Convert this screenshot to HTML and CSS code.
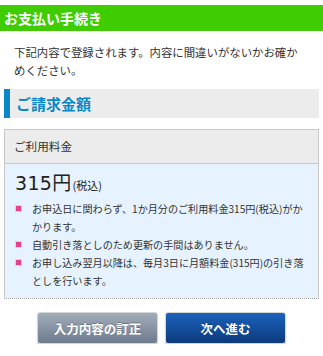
FILE: index.html
```html
<!DOCTYPE html>
<html lang="ja">
<head>
<meta charset="utf-8">
<link rel="stylesheet" href="styles.css">
</head>
<body>
<h1 class="page-title">お支払い手続き</h1>
<p class="lead">下記内容で登録されます。内容に間違いがないかお確かめください。</p>
<h2 class="section-title">ご請求金額</h2>
<div class="card">
  <div class="card-head">ご利用料金</div>
  <div class="card-body">
    <div class="price"><span class="amount">315円</span><span class="tax">(税込)</span></div>
    <ul class="notes">
      <li>お申込日に関わらず、1か月分のご利用料金315円(税込)がかかります。</li>
      <li>自動引き落としのため更新の手間はありません。</li>
      <li>お申し込み翌月以降は、毎月3日に月額料金(315円)の引き落としを行います。</li>
    </ul>
  </div>
</div>
<div class="actions">
  <button class="btn btn-back">入力内容の訂正</button>
  <button class="btn btn-next">次へ進む</button>
</div>
</body>
</html>
```
FILE: styles.css
```css
html, body {
  margin: 0;
  padding: 0;
  background: #fff;
}
body {
  padding-top: 5px;
  font-family: "Noto Sans CJK JP", "Noto Sans", sans-serif;
  color: #333;
}
.page-title {
  margin: 0;
  height: 26px;
  line-height: 26px;
  padding-left: 4px;
  background: #3fcc00;
  color: #fff;
  font-size: 14px;
  font-weight: bold;
}
.lead {
  margin: 12px 14px 10px 14px;
  font-size: 11.4px;
  line-height: 18px;
  color: #333;
}
.section-title {
  margin: 0 4px;
  height: 29px;
  line-height: 29px;
  background: #ececec;
  border-left: 6px solid #0a87c8;
  padding-left: 6px;
  color: #0a87c8;
  font-size: 15px;
  font-weight: bold;
}
.card {
  margin: 11px 4px 0 4px;
  border: 1px solid #c8c8c8;
  border-bottom: 1px dotted #a0a0a0;
}
.card-head {
  height: 33px;
  line-height: 33px;
  background: #ececec;
  border-bottom: 1px solid #c8c8c8;
  padding-left: 9px;
  font-size: 11.6px;
  color: #333;
}
.card-body {
  background: #e6f2fd;
  padding: 7px 8px 8px 10px;
}
.price {
  line-height: 24px;
  color: #222;
}
.amount {
  font-family: "DejaVu Sans", "Noto Sans CJK JP", sans-serif;
  font-size: 19px;
  letter-spacing: 0.3px;
}
.tax {
  font-size: 11px;
  margin-left: 1px;
}
.notes {
  list-style: none;
  margin: 3px 0 0 0;
  padding: 0;
}
.notes li {
  position: relative;
  padding-left: 17px;
  font-size: 10.1px;
  line-height: 18px;
  color: #333;
}
.notes li::before {
  content: "";
  position: absolute;
  left: 0;
  top: 5px;
  width: 5px;
  height: 5px;
  background: #e8408c;
  border: 1px solid #f8c6dc;
}
.actions {
  display: flex;
  justify-content: center;
  gap: 7px;
  margin-top: 13px;
}
.btn {
  width: 121px;
  height: 32px;
  border-radius: 3px;
  border: 1px solid #d6d6d6;
  box-shadow: 0 1px 1px rgba(0,0,0,0.35);
  color: #fff;
  font-family: "Noto Sans CJK JP", sans-serif;
  font-size: 12.5px;
  font-weight: bold;
  padding: 0;
  text-shadow: 0 -1px 0 rgba(0,0,0,0.25);
}
.btn-back {
  background: linear-gradient(#a2adbb, #6e7b8c);
}
.btn-next {
  background: linear-gradient(#1b62bc, #0c3a7c);
}
```
